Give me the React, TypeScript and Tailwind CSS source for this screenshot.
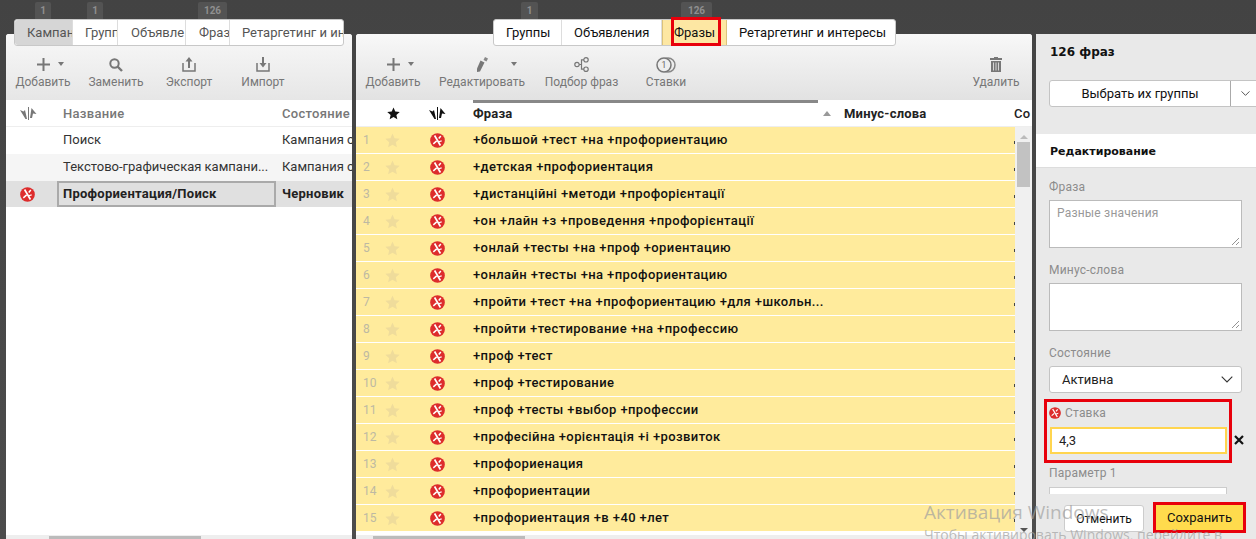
const sans = "font-['Roboto','Liberation_Sans',sans-serif]";

function ErrorIcon({ size = 18 }: { size?: number }) {
  return (
    <svg width={size} height={size} viewBox="0 0 18 18" className="block">
      <circle cx="9" cy="9" r="8.800" fill="#dd2c2c" />
      <path d="M5.500 3l7 12" stroke="#fff" strokeWidth="2" fill="none" />
      <path d="M13 3.500l-2.500 3M8 9.500l-4 3.500" stroke="#fff" strokeWidth="1.800" fill="none" />
      <path d="M10.500 10.500l3.500-1" stroke="#fff" strokeWidth="1.500" fill="none" />
    </svg>
  );
}

function CompareIcon({ color }: { color: string }) {
  return (
    <svg width="17" height="13" viewBox="0 0 17 13" className="block">
      <path d="M0 3l3.500 1.500L5 3l2 9H5.500z" fill={color} />
      <path d="M8 0h1v13H8z" fill={color} />
      <path d="M10 11l1.500-10 5 6-3.500-.5-1 4.500z" fill={color} />
    </svg>
  );
}

function StarIcon({ color, size = 14 }: { color: string; size?: number }) {
  return (
    <svg width={size} height={size} viewBox="0 0 14 14" className="block">
      <path d="M7 .5l1.900 4.400 4.800.5-3.600 3.200 1 4.700L7 10.900l-4.100 2.400 1-4.700L.3 5.400l4.800-.5z" fill={color} />
    </svg>
  );
}

function Chevron({ w = 12 }: { w?: number }) {
  return (
    <svg width={w} height="7" viewBox="0 0 12 7" className="block">
      <path d="M.7.7L6 6l5.300-5.300" stroke="#333" strokeWidth="1.100" fill="none" />
    </svg>
  );
}

function Caret() {
  return <div className="w-0 h-0 border-x-[3px] border-x-transparent border-t-[4px] border-t-[#777]" />;
}

function PlusIcon() {
  return (
    <svg width="13" height="13" viewBox="0 0 13 13" className="block">
      <path d="M5.500 0h2v5.500H13v2H7.500V13h-2V7.500H0v-2h5.500z" fill="#777" />
    </svg>
  );
}

function SearchIcon() {
  return (
    <svg width="14" height="14" viewBox="0 0 14 14" className="block">
      <circle cx="5.500" cy="5.500" r="4.200" stroke="#777" strokeWidth="2" fill="none" />
      <path d="M8.500 8.500L13 13" stroke="#777" strokeWidth="2.400" />
    </svg>
  );
}

function ExportIcon({ down }: { down?: boolean }) {
  return (
    <svg width="14" height="15" viewBox="0 0 14 15" className="block">
      <path d="M1 6v8h12V6" stroke="#777" strokeWidth="1.500" fill="none" />
      {down ? (
        <path d="M6 0h2v6h2.500L7 10.500 3.500 6H6z" fill="#777" />
      ) : (
        <path d="M7 0l3.500 4.500H8V11H6V4.500H3.500z" fill="#777" />
      )}
    </svg>
  );
}

function PencilIcon() {
  return (
    <svg width="11" height="15" viewBox="0 0 11 15" className="block">
      <path d="M3.500 3.500l4 2L3 14.500l-3 .5V11.500z" fill="#777" />
      <path d="M8 0l3 1.500-1.500 3-3-1.500z" fill="#888" />
    </svg>
  );
}

function GraphIcon() {
  return (
    <svg width="15" height="15" viewBox="0 0 15 15" className="block">
      <circle cx="3" cy="7.500" r="2.200" stroke="#777" strokeWidth="1.200" fill="none" />
      <circle cx="12" cy="2.800" r="2.200" stroke="#777" strokeWidth="1.200" fill="none" />
      <circle cx="12" cy="12.200" r="2.200" stroke="#777" strokeWidth="1.200" fill="none" />
      <path d="M5.200 7.500H7.500V2.800h2.300M7.500 7.500v4.700h2.300" stroke="#777" strokeWidth="1.200" fill="none" />
    </svg>
  );
}

function BidsIcon() {
  return (
    <svg width="20" height="16" viewBox="0 0 20 16" className="block">
      <circle cx="12" cy="8" r="7" stroke="#888" strokeWidth="1.500" fill="none" />
      <circle cx="8" cy="8" r="7" fill="#eee" stroke="#777" strokeWidth="1.500" />
      <text x="8" y="11" textAnchor="middle" fontSize="8.500" fill="#666" fontFamily="Roboto">1</text>
    </svg>
  );
}

function TrashIcon() {
  return (
    <svg width="12" height="15" viewBox="0 0 12 15" className="block">
      <path d="M4 0h4v1h4v2H0V1h4zM1 4h10v11H1z" fill="#777" />
      <path d="M3.500 5.500v8M6 5.500v8M8.500 5.500v8" stroke="#eee" strokeWidth=".8" />
    </svg>
  );
}

function Tool({ icon, label, caret, className }: { icon: React.ReactNode; label: string; caret?: string; className: string }) {
  return (
    <div className={`flex flex-col items-center ${className}`}>
      <div className="relative h-[21px] flex items-center justify-center">
        {icon}
        {caret && <div className={`absolute top-[8px] ${caret}`}><Caret /></div>}
      </div>
      <span className="text-[12px] leading-[14px] text-[#777] whitespace-nowrap">{label}</span>
    </div>
  );
}

function Badge({ text, className }: { text: string; className: string }) {
  return (
    <div className={`absolute -top-[32px] h-[17px] bg-[#535353] rounded-t-[2px] text-[10px] font-bold text-[#8f8f8f] flex items-center justify-center ${className}`}>
      {text}
    </div>
  );
}

function Tab({ text, className }: { text: string; className: string }) {
  return (
    <div className={`h-full flex items-center overflow-hidden whitespace-nowrap border-r border-[#ddd] last:border-r-0 ${className}`}>
      {text}
    </div>
  );
}

const phrases = [
  "+большой +тест +на +профориентацию",
  "+детская +профориентация",
  "+дистанційні +методи +профорієнтації",
  "+он +лайн +з +проведення +профорієнтації",
  "+онлай +тесты +на +проф +ориентацию",
  "+онлайн +тесты +на +профориентацию",
  "+пройти +тест +на +профориентацию +для +школьн...",
  "+пройти +тестирование +на +профессию",
  "+проф +тест",
  "+проф +тестирование",
  "+проф +тесты +выбор +профессии",
  "+професійна +орієнтація +і +розвиток",
  "+профориенация",
  "+профориентации",
  "+профориентация +в +40 +лет",
];

function Label({ text }: { text: string }) {
  return <div className="h-[13px] leading-[13px] text-[12px] text-[#8c8c8c] tracking-[0.2px]">{text}</div>;
}

function Resize() {
  return (
    <svg width="9" height="9" viewBox="0 0 9 9" className="absolute right-[1px] bottom-[1px]">
      <path d="M1 8l7-7M5 8l3-3" stroke="#777" strokeWidth=".8" />
    </svg>
  );
}

export default function App() {
  return (
    <div className={`relative h-[539px] w-[1256px] overflow-hidden flex gap-[4px] pl-[6px] pt-[34px] bg-[linear-gradient(#434343,#4c4c4c)] ${sans}`}>
      {/* кампании */}
      <div className="relative w-[346px] h-[505px] shrink-0 bg-white flex flex-col rounded-t-[3px]">
        <Badge text="1" className="left-[29px] w-[16px]" />
        <Badge text="1" className="left-[81px] w-[16px]" />
        <Badge text="126" className="left-[192px] w-[29px]" />
        <div className="absolute -top-[15px] left-[8px] w-[330px] h-[27px] flex bg-white border border-[#c8c8c8] rounded-[3px] text-[13px] text-[#555] z-10">
          <Tab text="Кампан" className="w-[58px] bg-[#d6d6d6] pl-[12px] rounded-l-[3px]" />
          <Tab text="Групп" className="w-[45px] pl-[12px]" />
          <Tab text="Объявле" className="w-[68px] pl-[13px]" />
          <Tab text="Фраз" className="w-[44px] pl-[13px]" />
          <Tab text="Ретаргетинг и инт" className="flex-1 pl-[12px]" />
        </div>
        <div className="h-[66px] shrink-0 pt-[20px] flex bg-[linear-gradient(#f8f8f8,#e6e6e6)] rounded-t-[3px]">
          <Tool icon={<PlusIcon />} label="Добавить" caret="left-[calc(100%+8px)]" className="ml-[10px] w-[54px]" />
          <Tool icon={<SearchIcon />} label="Заменить" className="ml-[19px] w-[54px]" />
          <Tool icon={<ExportIcon />} label="Экспорт" className="ml-[23px] w-[46px]" />
          <Tool icon={<ExportIcon down />} label="Импорт" className="ml-[30px] w-[42px]" />
        </div>
        <div className="h-[27px] shrink-0 flex items-center pt-[1px] border-b border-[#eee] text-[13px] text-[#777] font-medium tracking-[0.3px] whitespace-nowrap overflow-hidden">
          <div className="w-[57px] shrink-0 pl-[14px]"><CompareIcon color="#777" /></div>
          <div className="w-[219px] shrink-0">Название</div>
          <div>Состояние</div>
        </div>
        <div className="h-[27px] shrink-0 flex items-center pb-[1px] text-[13px] text-[#333] whitespace-nowrap overflow-hidden">
          <div className="w-[57px] shrink-0" />
          <div className="w-[219px] shrink-0">Поиск</div>
          <div>Кампания о</div>
        </div>
        <div className="h-[27px] shrink-0 flex items-center pb-[1px] bg-[#f5f5f5] text-[13px] text-[#333] whitespace-nowrap overflow-hidden">
          <div className="w-[57px] shrink-0" />
          <div className="w-[219px] shrink-0">Текстово-графическая кампани...</div>
          <div>Кампания о</div>
        </div>
        <div className="h-[26px] shrink-0 flex items-center bg-[#e0e0e0] text-[13px] font-bold tracking-[0.25px] text-[#222] whitespace-nowrap overflow-hidden">
          <div className="w-[51px] shrink-0 flex pl-[14px]"><ErrorIcon size={15} /></div>
          <div className="w-[219px] shrink-0 h-full flex items-center pl-[4px] border-2 border-[#aaa] mr-[6px]">Профориентация/Поиск</div>
          <div>Черновик</div>
        </div>
        <div className="flex-1" />
        <div className="h-[4px] shrink-0 bg-[#eee] pl-[43px]"><div className="w-[152px] h-[3px] mt-[1px] bg-[#bbb]" /></div>
      </div>

      {/* фразы */}
      <div className="relative w-[676px] h-[505px] shrink-0 bg-white flex flex-col rounded-t-[3px]">
        <Badge text="1" className="left-[165px] w-[17px]" />
        <Badge text="126" className="left-[325px] w-[31px]" />
        <div className="absolute -top-[15px] left-[137px] h-[27px] flex bg-white border border-[#c8c8c8] rounded-[3px] text-[13px] text-[#111] z-10">
          <Tab text="Группы" className="w-[68px] pl-[12px]" />
          <Tab text="Объявления" className="w-[100px] pl-[12px]" />
          <Tab text="Фразы" className="w-[65px] pl-[11px] bg-[#fde7a3] border-l border-l-[#dcc27a] border-r-[#dcc27a]" />
          <Tab text="Ретаргетинг и интересы" className="w-[168px] pl-[12px]" />
        </div>
        <div className="absolute -top-[17px] left-[315px] w-[50px] h-[29px] border-[3px] border-[#e8000b] z-20" />
        <div className="h-[66px] shrink-0 pt-[20px] flex bg-[linear-gradient(#f8f8f8,#e2e2e2)] rounded-t-[3px]">
          <Tool icon={<PlusIcon />} label="Добавить" caret="left-[calc(100%+8px)]" className="ml-[10px] w-[54px]" />
          <Tool icon={<PencilIcon />} label="Редактировать" caret="left-[calc(100%+23px)]" className="ml-[20px] w-[84px]" />
          <Tool icon={<GraphIcon />} label="Подбор фраз" className="ml-[20px] w-[75px]" />
          <Tool icon={<BidsIcon />} label="Ставки" className="ml-[27px] w-[40px]" />
          <div className="flex-1" />
          <Tool icon={<TrashIcon />} label="Удалить" className="mr-[13px] w-[46px]" />
        </div>
        <div className="relative h-[27px] shrink-0 flex items-center pt-[1px] border-b border-[#eee] text-[13px] font-bold tracking-[0.2px] text-[#222]">
          <div className="absolute top-0 left-[117px] w-[345px] h-[3px] bg-[#888]" />
          <div className="w-[31px]" />
          <div className="w-[42px]"><StarIcon color="#111" size={13} /></div>
          <div className="w-[44px]"><CompareIcon color="#111" /></div>
          <div className="w-[350px]">Фраза</div>
          <div className="w-[21px]">
            <div className="w-0 h-0 border-x-[4px] border-x-transparent border-b-[5px] border-b-[#999]" />
          </div>
          <div className="w-[170px]">Минус-слова</div>
          <div className="font-medium">Со</div>
        </div>
        <div className="flex-1 flex min-h-0">
          <div className="flex-1 overflow-hidden">
            {phrases.map((phrase, i) => (
              <div key={phrase} className="h-[27px] flex items-center bg-[#ffeb9c] border-b border-white text-[13px] font-medium tracking-[0.4px] text-[#111] whitespace-nowrap">
                <div className="w-[29px] pl-[7px] text-[12px] tracking-normal text-[#bdb9a3] font-normal">{i + 1}</div>
                <div className="w-[45px]"><StarIcon color="#efdc9b" size={15} /></div>
                <div className="w-[43px]"><ErrorIcon size={15} /></div>
                <div>{phrase}</div>
                <div className="ml-auto w-[1px] h-[3px] mt-[5px] bg-[#444]" />
              </div>
            ))}
          </div>
          <div className="w-[17px] shrink-0 bg-[#f0f0f0] flex flex-col items-center pt-[8px] pb-[3px]">
            <div className="w-0 h-0 border-x-[4px] border-x-transparent border-b-[4px] border-b-[#bbb]" />
            <div className="w-[13px] h-[45px] mt-[3px] bg-[#c2c2c2]" />
            <div className="flex-1" />
            <div className="w-0 h-0 border-x-[4px] border-x-transparent border-t-[4px] border-t-[#555]" />
          </div>
        </div>
        <div className="h-[4px] shrink-0 bg-[#eee] pl-[17px]"><div className="w-[152px] h-[3px] mt-[1px] bg-[#bbb]" /></div>
      </div>

      {/* редактирование */}
      <div className="relative flex-1 h-[505px] bg-[#e9e9e9] flex flex-col">
        <div className="h-[46px] shrink-0 pt-[9px] pl-[14px] text-[12px] font-bold text-[#111] font-['DejaVu_Sans',sans-serif]">126 фраз</div>
        <div className="flex h-[27px] shrink-0 ml-[13px] -mr-[4px] bg-white border border-[#c4c4c4] rounded-[3px] text-[13px] text-[#111]">
          <div className="w-[181px] flex items-center justify-center border-r border-[#aaa]">Выбрать их группы</div>
          <div className="flex-1 flex items-center justify-center"><Chevron w={9} /></div>
        </div>
        <div className="h-[34px] mt-[27px] pt-[3px] shrink-0 flex items-center pl-[14px] bg-white border-b border-[#ddd] text-[11px] font-bold text-[#111] font-['DejaVu_Sans',sans-serif]">Редактирование</div>
        <div className="flex flex-col pl-[13px] pt-[13px]">
          <Label text="Фраза" />
          <div className="relative mt-[6px] w-[193px] h-[48px] bg-white border border-[#bbb] px-[7px] pt-[3px] text-[12px] text-[#999] tracking-[0.2px]">
            Разные значения
            <Resize />
          </div>
          <div className="mt-[16px]"><Label text="Минус-слова" /></div>
          <div className="relative mt-[6px] w-[193px] h-[48px] bg-white border border-[#bbb]">
            <Resize />
          </div>
          <div className="mt-[16px]"><Label text="Состояние" /></div>
          <div className="mt-[6px] w-[193px] h-[27px] flex items-center justify-between bg-white border border-[#c4c4c4] rounded-[3px] pl-[12px] pr-[8px] text-[13px] text-[#222]">
            Активна
            <Chevron />
          </div>
          <div className="relative mt-[6px] -ml-[5px] w-[188px] h-[64px] border-[3px] border-[#e8000b]">
            <div className="flex items-center h-[14px] mt-[4px] pl-[2px] gap-[4px]">
              <ErrorIcon size={12} />
              <span className="text-[12px] text-[#8c8c8c] tracking-[0.2px]">Ставка</span>
            </div>
            <div className="mt-[7px] ml-[3px] w-[177px] h-[27px] bg-white border-2 border-[#ffd54f] flex items-center pl-[7px] text-[13px] text-[#222]">4,3</div>
            <svg width="10" height="10" viewBox="0 0 10 10" className="absolute left-[187px] top-[33px]"><path d="M1 1l8 8M9 1l-8 8" stroke="#111" strokeWidth="2.200" /></svg>
          </div>
          <div className="mt-[4px]"><Label text="Параметр 1" /></div>
          <div className="mt-[7px] w-[178px] h-[27px] bg-white border border-[#ccc]" />
        </div>
        {/* футер поверх полей */}
        <div className="absolute left-0 right-0 bottom-0 h-[45px] bg-[#e9e9e9]">
          <div className="absolute left-[28px] top-[11px] w-[80px] h-[27px] flex items-center justify-center bg-white border border-[#ccc] rounded-[3px] text-[12px] text-[#111]">Отменить</div>
          <div className="absolute left-[117px] top-[8px] w-[93px] h-[31px] flex items-center justify-center bg-[#ffdb4d] border-[3px] border-[#e8000b] text-[13px] text-[#111]">Сохранить</div>
        </div>
      </div>

      {/* водяной знак */}
      <div className="absolute left-[924px] top-[500px] text-[#a0a0a0]/70 whitespace-nowrap pointer-events-none z-30 font-['Open_Sans',sans-serif]">
        <div className="text-[19px] leading-[24px]">Активация Windows</div>
        <div className="text-[14px] leading-[22px]">Чтобы активировать Windows, перейдите в</div>
      </div>
    </div>
  );
}
